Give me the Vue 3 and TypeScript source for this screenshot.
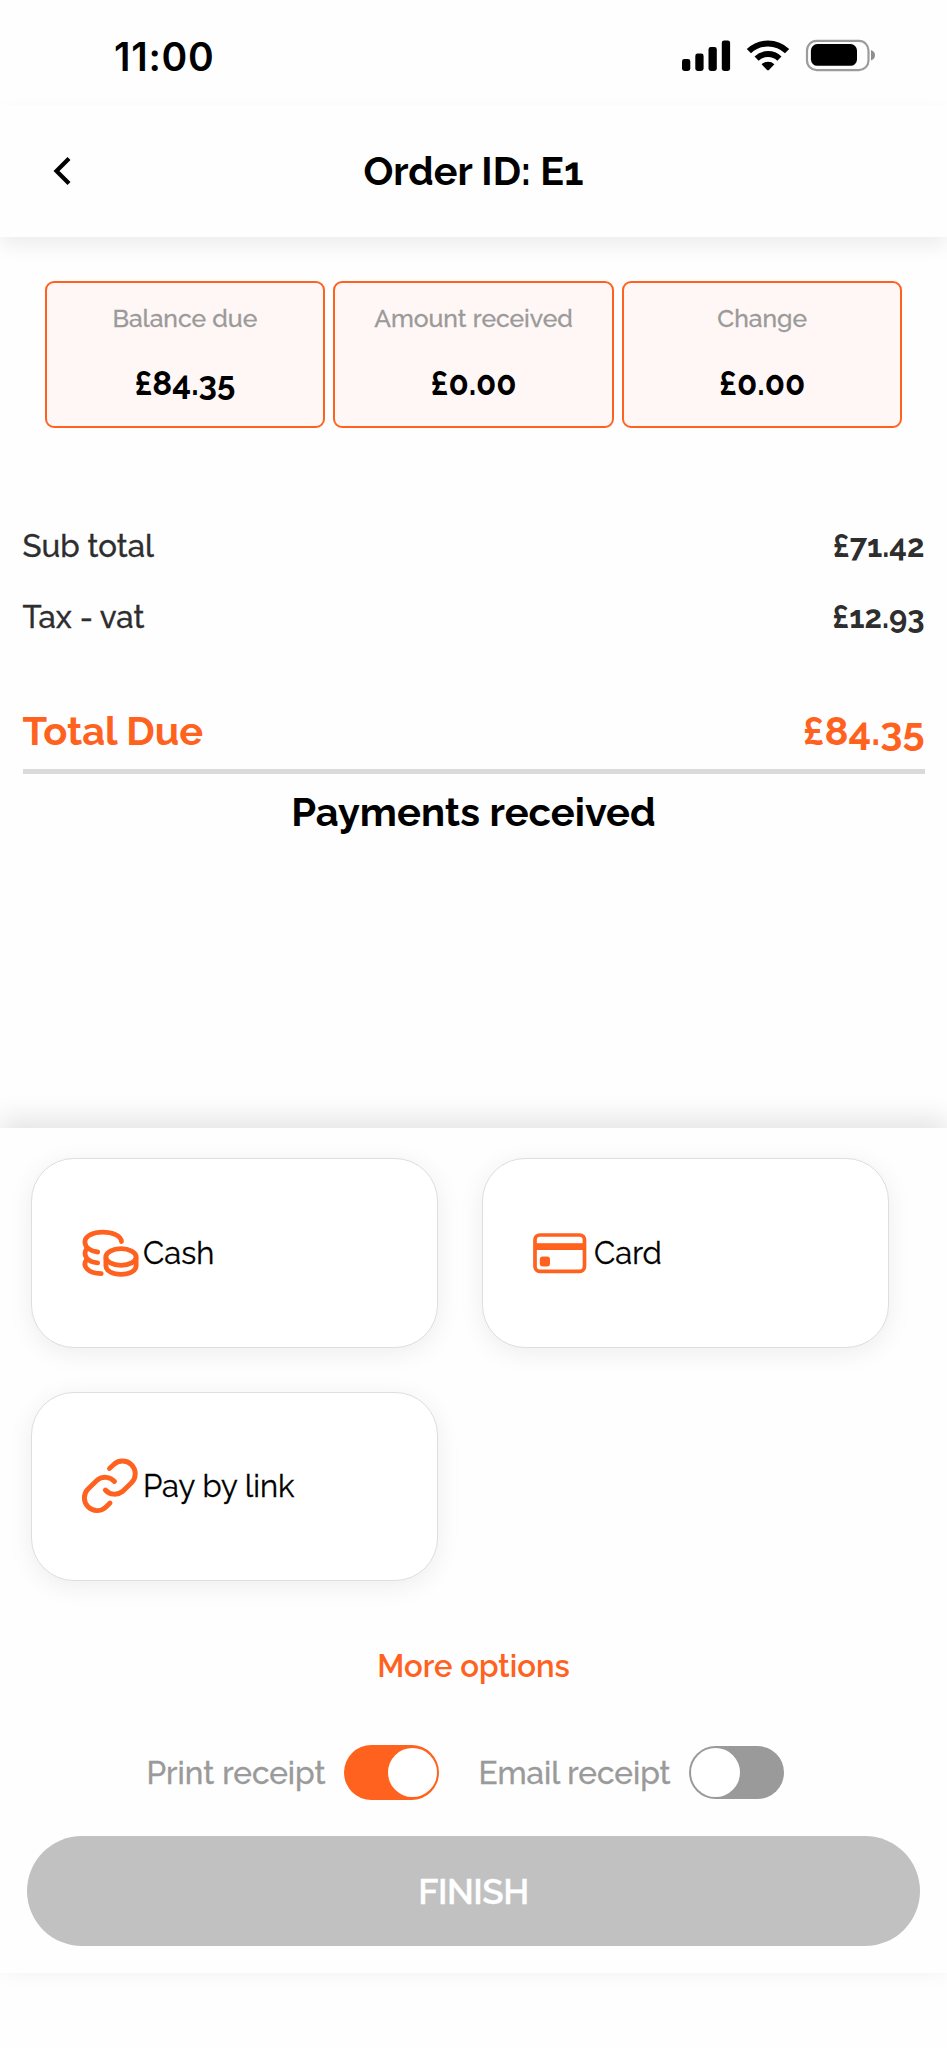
<script setup lang="ts">
import { ref } from 'vue'

interface Line {
  label: string
  value: string
}

const summary: Line[] = [
  { label: 'Balance due', value: '£84.35' },
  { label: 'Amount received', value: '£0.00' },
  { label: 'Change', value: '£0.00' },
]

const lines: Line[] = [
  { label: 'Sub total', value: '£71.42' },
  { label: 'Tax - vat', value: '£12.93' },
]

const methods: { id: 'cash' | 'card' | 'link'; label: string }[] = [
  { id: 'cash', label: 'Cash' },
  { id: 'card', label: 'Card' },
  { id: 'link', label: 'Pay by link' },
]

const printReceipt = ref(true)
const emailReceipt = ref(false)
</script>

<template>
  <div class="screen">
    <div class="status-bar">
      <span class="time">11:00</span>
      <svg class="status-icons" width="196" height="34" viewBox="0 0 196 34">
        <g fill="#000">
          <rect x="1" y="20" width="8.3" height="12" rx="2.4" />
          <rect x="14.3" y="14.6" width="8.3" height="17.4" rx="2.4" />
          <rect x="27.5" y="8" width="8.3" height="24" rx="2.4" />
          <rect x="40.8" y="1.4" width="8.3" height="30.6" rx="2.4" />
        </g>
        <g fill="none" stroke="#000" stroke-width="6">
          <path d="M67.9 12.2 A27.5 27.5 0 0 1 106.1 12.2" />
          <path d="M75.6 19.6 A16.5 16.5 0 0 1 98.4 19.6" />
        </g>
        <path d="M80.6 25.2 A9.5 9.5 0 0 1 93.4 25.2 L87.9 31.1 Q87 32 86.1 31.1 Z" fill="#000" />
        <rect x="126" y="1.9" width="61.5" height="29.2" rx="9.5" fill="none" stroke="#9c9c9c" stroke-width="2.2" />
        <rect x="129.9" y="5" width="46.1" height="21.8" rx="6.5" fill="#000" />
        <path d="M190 11 Q194 12.5 194 16.2 Q194 19.9 190 21.4 Z" fill="#8e8e8e" />
      </svg>
    </div>

    <header class="header">
      <svg class="back" width="20" height="30" viewBox="0 0 20 30">
        <path d="M16 2.5 L3.5 15 L16 27.5" fill="none" stroke="#000" stroke-width="4.2" />
      </svg>
      <h1>Order ID: E1</h1>
    </header>

    <main class="order">
      <section class="summary">
        <div v-for="item in summary" :key="item.label" class="tile">
          <span class="tile-label">{{ item.label }}</span>
          <span class="tile-value">{{ item.value }}</span>
        </div>
      </section>

      <section class="totals">
        <div v-for="line in lines" :key="line.label" class="line">
          <span>{{ line.label }}</span>
          <b>{{ line.value }}</b>
        </div>
        <div class="total">
          <span>Total Due</span>
          <span>£84.35</span>
        </div>
        <h2>Payments received</h2>
      </section>
    </main>

    <section class="panel">
      <div class="methods">
        <button v-for="m in methods" :key="m.id" class="method" type="button">
          <svg v-if="m.id === 'cash'" class="icon" width="60" height="60" viewBox="0 0 60 60">
            <g fill="none" stroke="#ff621f" stroke-width="4.8" stroke-linecap="round" transform="translate(0.7 0)">
              <ellipse cx="40.3" cy="34" rx="15.1" ry="8.3" />
              <path d="M25.2 35 V43 C25.2 47.8 31.8 51.4 40.3 51.4 S55.4 47.8 55.4 43 V35" />
              <path d="M40.8 18.6 C40.2 12.6 31.8 9.1 22 9.1 C12 9.1 4.2 13.2 4.2 19 C4.2 24.2 9.5 28.3 17 29" />
              <path d="M6 25.5 C1.5 32 6.5 39.2 17 39.8" />
              <path d="M6 36.5 C1 43 7 50.3 20.5 50.6" />
            </g>
          </svg>
          <svg v-else-if="m.id === 'card'" class="icon" width="60" height="60" viewBox="0 0 60 60">
            <rect x="4" y="12" width="49.5" height="36.3" rx="4.8" fill="none" stroke="#ff621f" stroke-width="3.7" />
            <rect x="4" y="20.2" width="49.5" height="6.8" fill="#ff621f" />
            <rect x="8.8" y="33.4" width="10.2" height="10.2" rx="3" fill="#ff621f" />
          </svg>
          <svg v-else class="icon" width="60" height="60" viewBox="0 0 60 60">
            <g fill="none" stroke="#ff621f" stroke-width="4.9" stroke-linecap="round" stroke-linejoin="round" transform="translate(0 -0.8)">
              <path d="M29.5 13.3 L33.5 9.5 A12.7 12.7 0 0 1 51.5 27.5 L42.5 36.3 A12.7 12.7 0 0 1 25.3 34.8" />
              <path d="M34.5 26.3 A12.7 12.7 0 0 0 17.3 24.8 L7.8 34 A12.7 12.7 0 0 0 25.7 52 L30 47.8" />
            </g>
          </svg>
          <span>{{ m.label }}</span>
        </button>
      </div>

      <a class="more">More options</a>

      <div class="receipts">
        <label>Print receipt</label>
        <span class="switch" :class="{ on: printReceipt }" @click="printReceipt = !printReceipt"><i /></span>
        <label class="second">Email receipt</label>
        <span class="switch" :class="{ on: emailReceipt }" @click="emailReceipt = !emailReceipt"><i /></span>
      </div>

      <button class="finish" type="button">FINISH</button>
    </section>
  </div>
</template>

<style>
body {
  margin: 0;
  background: #fefefe;
}
</style>

<style scoped>
.screen {
  display: flex;
  flex-direction: column;
  box-sizing: border-box;
  width: 947px;
  height: 2048px;
  overflow: hidden;
  background: #fefefe;
  color: #000;
  font-family: Raleway, Lato, sans-serif;
}

.status-bar {
  display: flex;
  flex: none;
  align-items: flex-start;
  justify-content: space-between;
  box-sizing: border-box;
  height: 105px;
  padding: 33px 70px 0 114px;
}

.time {
  font-family: Inter, "Liberation Sans", sans-serif;
  font-size: 39px;
  font-weight: 600;
  line-height: 48px;
  letter-spacing: 0.7px;
}

.status-icons {
  margin-top: 6px;
}

.header {
  display: grid;
  flex: none;
  grid-template-columns: 120px 1fr 120px;
  align-items: center;
  height: 132px;
  background: #fefefe;
  box-shadow: 0 9px 18px rgba(0, 0, 0, 0.065);
}

.back {
  margin-left: 52.5px;
}

h1,
h2 {
  margin: 0;
  font-weight: 700;
  text-align: center;
}

h1 {
  font-size: 39.5px;
  line-height: 50px;
}

.order {
  flex: none;
  height: 890.5px;
}

.summary {
  display: grid;
  grid-template-columns: repeat(3, 1fr);
  gap: 8px;
  padding: 44px 44.5px 0;
}

.tile {
  display: flex;
  flex-direction: column;
  align-items: center;
  box-sizing: border-box;
  height: 147px;
  padding-top: 20px;
  border: 2px solid #ff621f;
  border-radius: 9px;
  background: #fff7f5;
}

.tile-label {
  color: #9a9a9a;
  font-size: 24.7px;
  font-weight: 500;
  line-height: 32px;
  -webkit-text-stroke: 0.3px currentColor;
}

.tile-value {
  margin-top: 27px;
  font-size: 33px;
  font-weight: 700;
  line-height: 44px;
}

.totals {
  padding: 82.5px 22.5px 0;
}

.line {
  display: flex;
  align-items: center;
  justify-content: space-between;
  height: 71px;
  color: #2e2e2e;
  font-size: 31px;
  font-weight: 500;
}

.line span {
  font-size: 31.2px;
  -webkit-text-stroke: 0.3px currentColor;
}

.total {
  display: flex;
  align-items: center;
  justify-content: space-between;
  height: 75.5px;
  margin-top: 40.5px;
  border-bottom: 5px solid #dadada;
  color: #ff621f;
  font-size: 39.8px;
  font-weight: 700;
}

h2 {
  font-size: 39.9px;
  line-height: 76px;
}

.panel {
  flex: none;
  box-sizing: border-box;
  height: 845.5px;
  padding: 30.5px 27px 0;
  background: #fefefe;
  box-shadow: 0 -9px 26px rgba(0, 0, 0, 0.11);
}

.methods {
  display: grid;
  grid-template-columns: 407px 407px;
  gap: 44px;
  padding-left: 4px;
}

.method {
  display: flex;
  align-items: center;
  box-sizing: border-box;
  height: 189.5px;
  padding: 0 0 0 48px;
  border: 1px solid #dedede;
  border-radius: 43px;
  background: #fff;
  box-shadow: 0 5px 26px rgba(0, 0, 0, 0.07);
  color: #000;
  font-family: inherit;
  font-size: 31px;
  font-weight: 400;
  -webkit-text-stroke: 0.3px currentColor;
}

.icon {
  flex: none;
  margin-right: 3px;
}

.more {
  display: block;
  margin-top: 65.5px;
  color: #ff621f;
  font-size: 31.1px;
  font-weight: 600;
  line-height: 38px;
  text-align: center;
}

.receipts {
  display: flex;
  align-items: center;
  height: 56px;
  margin-top: 60px;
  padding-left: 119.5px;
  color: #9a9a9a;
  font-size: 31.5px;
  font-weight: 500;
  -webkit-text-stroke: 0.3px currentColor;
}

.second {
  margin-left: 40px;
}

.switch {
  display: flex;
  align-items: center;
  box-sizing: border-box;
  width: 95px;
  height: 53px;
  margin-left: 18px;
  padding: 0 2px;
  border-radius: 28px;
  background: #9a9a9a;
}

.switch.on {
  justify-content: flex-end;
  height: 55px;
  background: #ff621f;
}

.switch i {
  width: 49px;
  height: 49px;
  border-radius: 50%;
  background: #fff;
}

.finish {
  display: block;
  width: 893px;
  height: 110px;
  margin-top: 35px;
  padding: 2px 0 0;
  border: 0;
  border-radius: 55px;
  background: #c1c1c1;
  color: #fff;
  font-family: inherit;
  font-size: 35px;
  font-weight: 600;
  letter-spacing: -0.5px;
  -webkit-text-stroke: 0.3px currentColor;
}
</style>
